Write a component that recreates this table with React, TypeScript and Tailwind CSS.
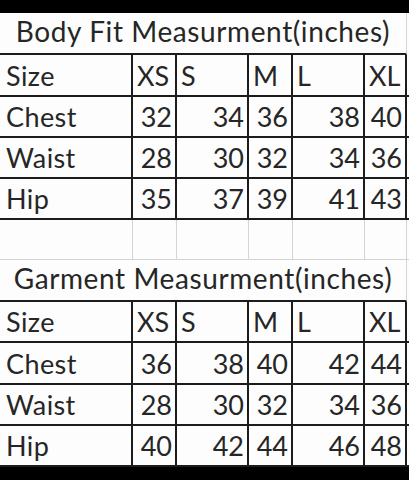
import React from "react";

type Row = { label: string; vals: (string | number)[] };

const cols = ["w-[133px]", "w-[44px]", "w-[72px]", "w-[44px]", "w-[72px]", "w-[42px]"];

function Title({ text, h }: { text: string; h: string }) {
  return (
    <div className={`flex ${h} w-[407px] items-end justify-center border-b-2 border-r border-b-[#1c1c1c] border-r-[#d4d4d4] pb-[8px] text-[28px] tracking-[0.6px]`}>
      <span>{text}</span>
    </div>
  );
}

function DataRow({ row, h, header }: { row: Row; h: string; header?: boolean }) {
  return (
    <div className={`flex ${h} border-b-2 border-[#1c1c1c]`}>
      <div className={`${cols[0]} flex items-end border-r-2 border-[#1c1c1c] pb-[6px] pl-[6px] tracking-[0.4px]`}>{row.label}</div>
      {row.vals.map((v, i) => (
        <div
          key={i}
          className={`${cols[i + 1]} flex items-end border-r-2 border-[#1c1c1c] pb-[6px] ${header ? "justify-start pl-[4px]" : "justify-end pr-[3px]"}`}
        >
          {v}
        </div>
      ))}
    </div>
  );
}

function EmptyRow() {
  return (
    <div className="flex h-[40px] border-b border-[#d4d4d4]">
      {cols.map((c, i) => (
        <div key={i} className={`${c} border-r border-[#d4d4d4]`} />
      ))}
    </div>
  );
}

function Block({ title, rows, heights }: { title: string; rows: Row[]; heights: string[] }) {
  return (
    <>
      <Title text={title} h={heights[0]} />
      <DataRow row={{ label: "Size", vals: ["XS", "S", "M", "L", "XL"] }} h={heights[1]} header />
      {rows.map((r, i) => (
        <DataRow key={r.label} row={r} h={heights[i + 2]} />
      ))}
    </>
  );
}

export default function App() {
  return (
    <div
      className="flex h-[480px] w-[409px] flex-col bg-black text-[27px] leading-none text-[#262626]"
      style={{ fontFamily: "Lato, 'Open Sans', sans-serif" }}
    >
      <div className="h-[13px] shrink-0" />
      <div className="flex h-[454px] flex-col bg-[#fdfdfd]">
        <Block
          title="Body Fit Measurment(inches)"
          heights={["h-[42px]", "h-[42px]", "h-[41px]", "h-[41px]", "h-[41px]"]}
          rows={[
            { label: "Chest", vals: [32, 34, 36, 38, 40] },
            { label: "Waist", vals: [28, 30, 32, 34, 36] },
            { label: "Hip", vals: [35, 37, 39, 41, 43] },
          ]}
        />
        <EmptyRow />
        <Block
          title="Garment Measurment(inches)"
          heights={["h-[42px]", "h-[41px]", "h-[42px]", "h-[41px]", "h-[41px]"]}
          rows={[
            { label: "Chest", vals: [36, 38, 40, 42, 44] },
            { label: "Waist", vals: [28, 30, 32, 34, 36] },
            { label: "Hip", vals: [40, 42, 44, 46, 48] },
          ]}
        />
      </div>
      <div className="h-[13px] shrink-0" />
    </div>
  );
}
